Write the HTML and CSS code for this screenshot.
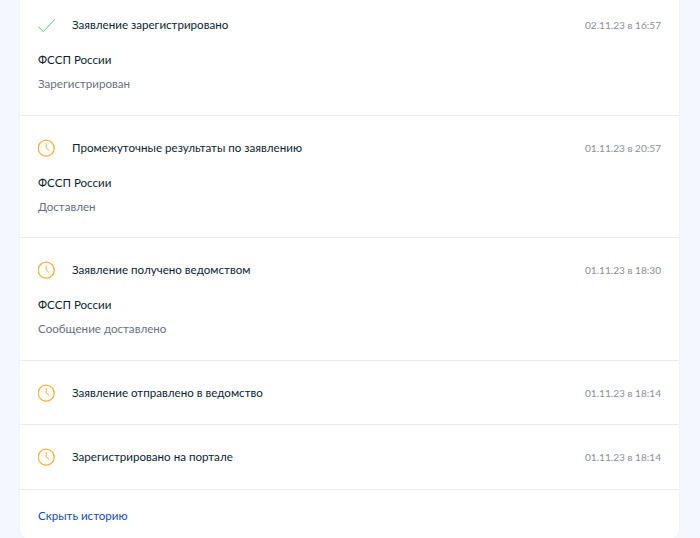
FILE: index.html
```html
<!DOCTYPE html>
<html lang="ru">
<head>
<meta charset="utf-8">
<title>История заявления</title>
<link rel="stylesheet" href="styles.css">
</head>
<body>
<main class="card">
  <section class="row row-first">
    <div class="head">
      <svg class="icon" viewBox="0 0 18 18"><path class="check" d="M0.2 10.6 L5.3 15.6 L17 3.2"/></svg>
      <span class="title">Заявление зарегистрировано</span>
      <time class="date">02.11.23 в 16:57</time>
    </div>
    <div class="org">ФССП России</div>
    <div class="status">Зарегистрирован</div>
  </section>
  <section class="row">
    <div class="head">
      <svg class="icon" viewBox="0 0 18 18"><circle class="clock" cx="8.2" cy="9.2" r="8"/><path class="hand" d="M8.2 4.2 V9.2 L11.2 11.5"/></svg>
      <span class="title">Промежуточные результаты по заявлению</span>
      <time class="date">01.11.23 в 20:57</time>
    </div>
    <div class="org">ФССП России</div>
    <div class="status">Доставлен</div>
  </section>
  <section class="row">
    <div class="head">
      <svg class="icon" viewBox="0 0 18 18"><circle class="clock" cx="8.2" cy="9.2" r="8"/><path class="hand" d="M8.2 4.2 V9.2 L11.2 11.5"/></svg>
      <span class="title">Заявление получено ведомством</span>
      <time class="date">01.11.23 в 18:30</time>
    </div>
    <div class="org">ФССП России</div>
    <div class="status">Сообщение доставлено</div>
  </section>
  <section class="row row-short">
    <div class="head">
      <svg class="icon" viewBox="0 0 18 18"><circle class="clock" cx="8.2" cy="9.2" r="8"/><path class="hand" d="M8.2 4.2 V9.2 L11.2 11.5"/></svg>
      <span class="title">Заявление отправлено в ведомство</span>
      <time class="date">01.11.23 в 18:14</time>
    </div>
  </section>
  <section class="row row-short">
    <div class="head">
      <svg class="icon" viewBox="0 0 18 18"><circle class="clock" cx="8.2" cy="9.2" r="8"/><path class="hand" d="M8.2 4.2 V9.2 L11.2 11.5"/></svg>
      <span class="title">Зарегистрировано на портале</span>
      <time class="date">01.11.23 в 18:14</time>
    </div>
  </section>
  <footer class="foot"><a class="link" href="#">Скрыть историю</a></footer>
</main>
</body>
</html>
```

FILE: styles.css
```css
html, body {
  margin: 0;
  height: 538px;
  overflow: hidden;
  background: #f5f7fe;
}
body {
  font-family: Lato, "Noto Sans", sans-serif;
  color: #0b1f33;
}
.card {
  width: 659px;
  height: 538px;
  margin-left: 20px;
  background: #fff;
  border-radius: 0 0 8px 8px;
  box-shadow: 0 0 2px rgba(200, 208, 230, 0.3);
}
.row {
  padding: 22px 18px 20.3px;
  border-bottom: 1px solid #e8ebef;
}
.row-first {
  padding-top: 15px;
  padding-bottom: 21px;
}
.row-short {
  padding-bottom: 21.5px;
}
.head {
  display: flex;
  align-items: center;
  height: 20px;
}
.icon {
  width: 18px;
  height: 18px;
  flex: none;
  margin-right: 16px;
}
.check {
  fill: none;
  stroke: #4fc96b;
  stroke-width: 1;
}
.clock {
  fill: none;
  stroke: #f5b342;
  stroke-width: 1.3;
}
.hand {
  fill: none;
  stroke: #f5b342;
  stroke-width: 1;
}
.title {
  flex: 1;
  font-size: 11.6px;
  line-height: 20px;
}
.date {
  font-size: 10.1px;
  line-height: 20px;
  color: #86909c;
}
.org {
  margin-top: 15px;
  font-size: 11.6px;
  line-height: 20px;
}
.status {
  margin-top: 4px;
  font-size: 11.6px;
  line-height: 20px;
  color: #66727f;
}
.foot {
  padding: 14.5px 18px;
  line-height: 20px;
}
.link {
  font-size: 11.6px;
  color: #0d4cd3;
  text-decoration: none;
}
```
